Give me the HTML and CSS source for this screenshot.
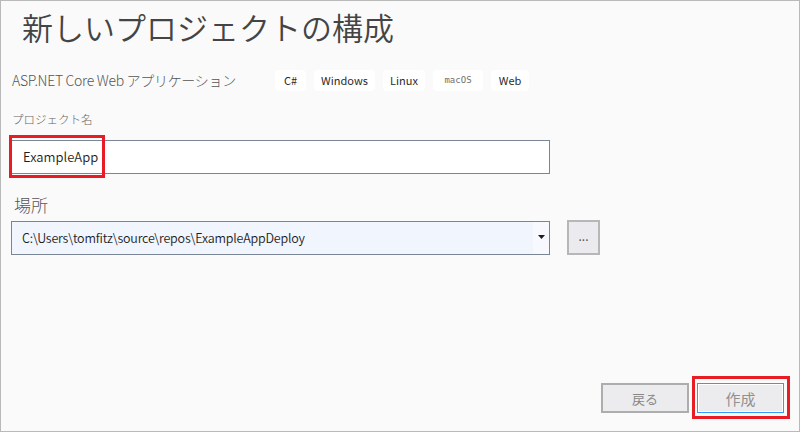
FILE: index.html
```html
<!DOCTYPE html>
<html lang="ja">
<head>
<meta charset="utf-8">
<link rel="stylesheet" href="styles.css">
</head>
<body>
<div class="window">
  <h1 class="title">新しいプロジェクトの構成</h1>
  <div class="subtitle-row">
    <span class="template-name">ASP.NET Core Web アプリケーション</span>
    <div class="tags">
      <span class="tag">C#</span>
      <span class="tag">Windows</span>
      <span class="tag">Linux</span>
      <span class="tag tag-mono">macOS</span>
      <span class="tag">Web</span>
    </div>
  </div>
  <div class="field-label small">プロジェクト名</div>
  <div class="field-wrap">
    <div class="textbox">ExampleApp</div>
    <div class="highlight hl-name"></div>
  </div>
  <div class="field-label large">場所</div>
  <div class="location-row">
    <div class="combo">
      <span class="combo-text">C:\Users\tomfitz\source\repos\ExampleAppDeploy</span>
      <span class="combo-btn"><svg width="7" height="4" viewBox="0 0 7 4"><path d="M0 0H7L3.5 4Z" fill="#1e1e1e"/></svg></span>
    </div>
    <button class="browse">...</button>
  </div>
  <div class="spacer"></div>
  <div class="footer">
    <button class="btn">戻る</button>
    <div class="btn-wrap">
      <button class="btn btn-primary">作成</button>
      <div class="highlight hl-create"></div>
    </div>
  </div>
</div>
</body>
</html>
```
FILE: styles.css
```css
* { box-sizing: border-box; }
html, body { margin: 0; padding: 0; }
body {
  background: #fafafa;
  font-family: "Noto Sans CJK JP", "Noto Sans", sans-serif;
}
.window {
  width: 800px;
  height: 432px;
  border: 1px solid #b9b9b9;
  background: #fafafa;
  display: flex;
  flex-direction: column;
  padding: 0 0 0 10px;
}
.title {
  margin: 5px 0 0 11px;
  font-size: 31px;
  line-height: 42px;
  font-weight: 350;
  color: #444444;
}
.subtitle-row {
  margin-top: 21px;
  display: flex;
  align-items: center;
  height: 22px;
}
.template-name {
  margin-left: 1px;
  font-size: 14px;
  font-weight: 300;
  color: #555555;
  width: 263px;
  letter-spacing: -0.3px;
}
.tags {
  display: flex;
  gap: 8px;
}
.tag {
  background: #ffffff;
  border-radius: 4px;
  height: 21px;
  line-height: 21px;
  font-size: 11px;
  color: #2b2b2b;
  text-align: center;
}
.tag:nth-child(1) { width: 31px; }
.tag:nth-child(2) { width: 61px; }
.tag:nth-child(3) { width: 42px; }
.tag:nth-child(4) { width: 50px; }
.tag:nth-child(5) { width: 38px; }
.tag-mono {
  font-family: "DejaVu Sans Mono", monospace;
  font-size: 9px;
  color: #707070;
}
.field-label {
  color: #666666;
  font-weight: 300;
}
.field-label.small {
  margin-top: 19px;
  margin-left: 1px;
  font-size: 11.5px;
  line-height: 18px;
}
.field-label.large {
  margin-top: 19px;
  margin-left: 3px;
  font-size: 17px;
  line-height: 24px;
  color: #555555;
}
.field-wrap {
  position: relative;
  margin-top: 12px;
  width: 539px;
}
.textbox {
  width: 539px;
  height: 34px;
  border: 1px solid #7a8696;
  background: #ffffff;
  padding-left: 11px;
  font-size: 13px;
  font-weight: 350;
  line-height: 32px;
  color: #1e1e1e;
}
.highlight {
  position: absolute;
  border: 3px solid #e81c24;
  pointer-events: none;
}
.hl-name {
  left: -2px;
  top: -5px;
  width: 96px;
  height: 43px;
}
.location-row {
  margin-top: 3px;
  display: flex;
  align-items: center;
  gap: 17px;
}
.combo {
  width: 539px;
  height: 34px;
  border: 1px solid #7a8696;
  background: #f1f5fd;
  display: flex;
  align-items: center;
}
.combo-text {
  flex: 1;
  padding-left: 10px;
  font-size: 12.5px;
  font-weight: 350;
  color: #1e1e1e;
  letter-spacing: -0.2px;
}
.combo-btn {
  width: 16px;
  height: 32px;
  background: #f7f9fe;
  display: flex;
  align-items: center;
  justify-content: center;
  padding-bottom: 1px;
}
.browse {
  width: 33px;
  height: 35px;
  border: 2px solid #b7b7b7;
  background: #ebebef;
  color: #555;
  font-size: 12px;
  padding: 0 0 4px;
  font-family: inherit;
}
.spacer { flex: 1; }
.footer {
  display: flex;
  justify-content: flex-end;
  gap: 8px;
  padding-right: 15px;
  margin-bottom: 18px;
}
.btn {
  width: 88px;
  height: 30px;
  border: 2px solid #adadad;
  background: #ececef;
  color: #888888;
  font-family: inherit;
  font-size: 13px;
  padding: 0;
}
.btn-wrap {
  position: relative;
}
.btn-primary {
  width: 87px;
  border: 1px solid #3399ff;
  box-shadow: inset 0 0 0 1px #ffffff;
  font-size: 15px;
  color: #909090;
}
.hl-create {
  left: -5px;
  top: -7px;
  width: 98px;
  height: 43px;
}
```
